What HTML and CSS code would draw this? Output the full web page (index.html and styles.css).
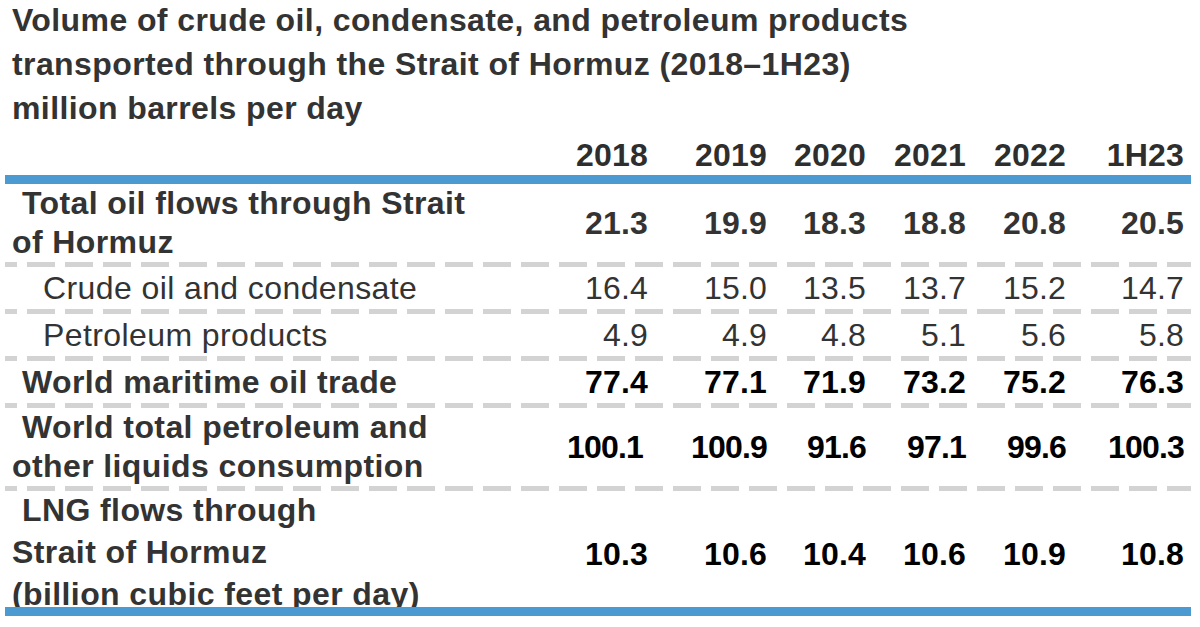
FILE: index.html
```html
<!DOCTYPE html>
<html lang="en">
<head>
<meta charset="utf-8">
<title>Strait of Hormuz oil flows</title>
<link rel="stylesheet" href="styles.css">
</head>
<body>
<div class="page">
  <h1 class="title">Volume of crude oil, condensate, and petroleum products<br>transported through the Strait of Hormuz (2018–1H23)<br>million barrels per day</h1>

  <div class="row head">
    <div class="label"></div>
    <div class="num">2018</div>
    <div class="num">2019</div>
    <div class="num">2020</div>
    <div class="num">2021</div>
    <div class="num">2022</div>
    <div class="num">1H23</div>
  </div>
  <div class="rule-blue"></div>

  <div class="row two bold">
    <div class="label">Total oil flows through Strait<br>of Hormuz</div>
    <div class="num">21.3</div>
    <div class="num">19.9</div>
    <div class="num">18.3</div>
    <div class="num">18.8</div>
    <div class="num">20.8</div>
    <div class="num">20.5</div>
  </div>
  <div class="rule-dash"></div>

  <div class="row one">
    <div class="label sub">Crude oil and condensate</div>
    <div class="num">16.4</div>
    <div class="num">15.0</div>
    <div class="num">13.5</div>
    <div class="num">13.7</div>
    <div class="num">15.2</div>
    <div class="num">14.7</div>
  </div>
  <div class="rule-dash"></div>

  <div class="row one">
    <div class="label sub">Petroleum products</div>
    <div class="num">4.9</div>
    <div class="num">4.9</div>
    <div class="num">4.8</div>
    <div class="num">5.1</div>
    <div class="num">5.6</div>
    <div class="num">5.8</div>
  </div>
  <div class="rule-dash"></div>

  <div class="row one bold black">
    <div class="label">World maritime oil trade</div>
    <div class="num">77.4</div>
    <div class="num">77.1</div>
    <div class="num">71.9</div>
    <div class="num">73.2</div>
    <div class="num">75.2</div>
    <div class="num">76.3</div>
  </div>
  <div class="rule-dash"></div>

  <div class="row two bold black tight">
    <div class="label">World total petroleum and<br>other liquids consumption</div>
    <div class="num first">100.1</div>
    <div class="num">100.9</div>
    <div class="num">91.6</div>
    <div class="num">97.1</div>
    <div class="num">99.6</div>
    <div class="num">100.3</div>
  </div>
  <div class="rule-dash"></div>

  <div class="row three bold black">
    <div class="label">LNG flows through<br>Strait of Hormuz<br>(billion cubic feet per day)</div>
    <div class="num">10.3</div>
    <div class="num">10.6</div>
    <div class="num">10.4</div>
    <div class="num">10.6</div>
    <div class="num">10.9</div>
    <div class="num">10.8</div>
  </div>
  <div class="rule-blue"></div>
</div>
</body>
</html>
```

FILE: styles.css
```css
html, body {
  margin: 0;
  padding: 0;
  background: #ffffff;
}

.page {
  width: 1200px;
  height: 627px;
  overflow: hidden;
  font-family: "Liberation Sans", Arial, Helvetica, sans-serif;
  color: #333333;
}

.title {
  margin: -2px 0 0 0;
  padding: 0 0 0 12px;
  font-size: 32px;
  font-weight: bold;
  line-height: 44px;
  letter-spacing: 0.4px;
  color: #333333;
}

.row {
  display: grid;
  grid-template-columns: 536px 100px 119px 99px 100px 100px 118px;
  padding: 0 16px 0 12px;
  align-items: center;
  font-size: 32px;
}

.head {
  height: 45px;
  align-items: end;
  font-weight: bold;
  line-height: 40px;
  color: #2e2e2e;
}

.num {
  text-align: right;
  white-space: nowrap;
  letter-spacing: 0.2px;
}

.label {
  white-space: nowrap;
  text-indent: 10px;
  letter-spacing: 0.4px;
}

.label.sub {
  padding-left: 31px;
  text-indent: 0;
}

.bold {
  font-weight: bold;
}

.black .num {
  color: #000000;
}

.tight .num {
  letter-spacing: -0.8px;
}

.tight .num.first {
  padding-right: 5px;
}

.one {
  height: 42px;
  line-height: 42px;
}

.two {
  height: 78px;
  line-height: 39px;
}

.three {
  height: 116px;
  line-height: 42px;
  align-items: start;
}

.three .label {
  margin-top: -2px;
}

.three .num {
  align-self: center;
  margin-top: 1px;
}

.rule-blue {
  position: relative;
  height: 9px;
  margin: 0 9px 0 5px;
  background: #4b9bd2;
}

.rule-dash {
  height: 5px;
  margin: 0 9px 0 5px;
  background-image: repeating-linear-gradient(90deg, #d3d3d3 0 28px, transparent 28px 38px);
  background-position: -16px 0;
}
```
